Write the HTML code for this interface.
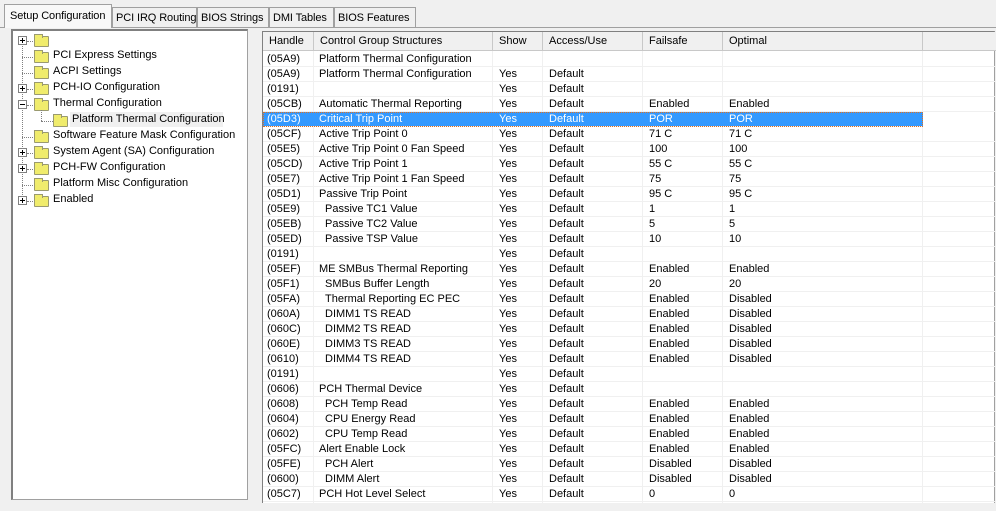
<!DOCTYPE html>
<html><head><style>
*{margin:0;padding:0;box-sizing:border-box}
body{width:996px;height:503px;background:#f0f0f0;font-family:"Liberation Sans",sans-serif;font-size:11px;color:#000;position:relative;overflow:hidden}
.a{position:absolute;white-space:nowrap}
.tab{position:absolute;top:7px;height:21px;border:1px solid #a0a0a0;border-bottom:none;background:#f0f0f0;padding:4px 0 0 3px;white-space:nowrap;overflow:hidden;line-height:13px;letter-spacing:-0.1px}
.tab.act{top:4px;height:24px;background:#f8f8f8;padding-top:5px;padding-left:5px;z-index:2}
#tree{position:absolute;left:11px;top:29px;width:237px;height:471px;background:#fff;border:1px solid #a0a0a0;border-left:2px solid #808080;border-top:2px solid #808080}
.pb{position:absolute;width:9px;height:9px;border:1px solid #808080;background:#fff}
.pb:before{content:"";position:absolute;left:1px;top:3px;width:5px;height:1px;background:#000}
.pb.p:after{content:"";position:absolute;left:3px;top:1px;width:1px;height:5px;background:#000}
.fd{position:absolute;width:15px;height:11px;background:#f0ec6c;border:1px solid #9a9a70;border-radius:1px}
.fd:before{content:"";position:absolute;left:-1px;top:-3px;width:7px;height:3px;background:#f0ec6c;border:1px solid #9a9a70;border-bottom:none}
.dh{position:absolute;height:0;border-top:1px dotted #808080}
.dv{position:absolute;width:0;border-left:1px dotted #808080}
#list{position:absolute;left:262px;top:31px;width:733px;height:472px;background:#fff;border-left:1px solid #808080;border-top:1px solid #808080;border-right:1px solid #a0a0a0}
.hd{position:absolute;top:0;height:19px;background:#f0f0f0;border-right:1px solid #c8c8c8;border-bottom:1px solid #c8c8c8;padding:3px 0 0 6px}
.vl{position:absolute;top:19px;width:1px;height:460px;background:#f0f0f0}
.row{position:absolute;left:0;width:732px;height:15px;border-bottom:1px solid #f0f0f0}
.row span{position:absolute;top:1px}
.sel{background:#3399ff;color:#fff;width:660px;outline:1px dotted #e07020;outline-offset:-1px}
</style></head><body>
<div class="tab act" style="left:4px;width:108px">Setup Configuration</div>
<div class="tab" style="left:112px;width:85px">PCI IRQ Routing</div>
<div class="tab" style="left:197px;width:72px">BIOS Strings</div>
<div class="tab" style="left:269px;width:65px">DMI Tables</div>
<div class="tab" style="left:334px;width:82px">BIOS Features</div>
<div class="a" style="left:0;top:27px;width:996px;height:1px;background:#a0a0a0"></div>

<div id="tree">
<div class="dv" style="left:9px;top:10px;height:160px"></div>
<div class="dh" style="left:14px;top:10px;width:8px"></div><div class="pb p" style="left:5px;top:5px"></div><div class="fd" style="left:21px;top:5px"></div>
<div class="dh" style="left:9px;top:26px;width:13px"></div><div class="fd" style="left:21px;top:21px"></div><div class="a" style="left:40px;top:18px">PCI Express Settings</div>
<div class="dh" style="left:9px;top:42px;width:13px"></div><div class="fd" style="left:21px;top:37px"></div><div class="a" style="left:40px;top:34px">ACPI Settings</div>
<div class="dh" style="left:14px;top:58px;width:8px"></div><div class="pb p" style="left:5px;top:53px"></div><div class="fd" style="left:21px;top:53px"></div><div class="a" style="left:40px;top:50px">PCH-IO Configuration</div>
<div class="dh" style="left:14px;top:74px;width:8px"></div><div class="pb" style="left:5px;top:69px"></div><div class="fd" style="left:21px;top:69px"></div><div class="a" style="left:40px;top:66px">Thermal Configuration</div>
<div class="dv" style="left:28px;top:79px;height:11px"></div><div class="dh" style="left:28px;top:90px;width:12px"></div><div class="fd" style="left:40px;top:85px"></div>
<div class="a" style="left:57px;top:81px;height:15px;width:153px;background:#f0f0f0;padding:1px 0 0 2px">Platform Thermal Configuration</div>
<div class="dh" style="left:9px;top:106px;width:13px"></div><div class="fd" style="left:21px;top:101px"></div><div class="a" style="left:40px;top:98px">Software Feature Mask Configuration</div>
<div class="dh" style="left:14px;top:122px;width:8px"></div><div class="pb p" style="left:5px;top:117px"></div><div class="fd" style="left:21px;top:117px"></div><div class="a" style="left:40px;top:114px">System Agent (SA) Configuration</div>
<div class="dh" style="left:14px;top:138px;width:8px"></div><div class="pb p" style="left:5px;top:133px"></div><div class="fd" style="left:21px;top:133px"></div><div class="a" style="left:40px;top:130px">PCH-FW Configuration</div>
<div class="dh" style="left:9px;top:154px;width:13px"></div><div class="fd" style="left:21px;top:149px"></div><div class="a" style="left:40px;top:146px">Platform Misc Configuration</div>
<div class="dh" style="left:14px;top:170px;width:8px"></div><div class="pb p" style="left:5px;top:165px"></div><div class="fd" style="left:21px;top:165px"></div><div class="a" style="left:40px;top:162px">Enabled</div>
</div>

<div id="list">
<div class="hd" style="left:0;width:51px">Handle</div>
<div class="hd" style="left:51px;width:179px">Control Group Structures</div>
<div class="hd" style="left:230px;width:50px">Show</div>
<div class="hd" style="left:280px;width:100px">Access/Use</div>
<div class="hd" style="left:380px;width:80px">Failsafe</div>
<div class="hd" style="left:460px;width:200px">Optimal</div>
<div class="hd" style="left:660px;width:73px;border-right:none"></div>
<div class="vl" style="left:50px"></div><div class="vl" style="left:229px"></div><div class="vl" style="left:279px"></div><div class="vl" style="left:379px"></div><div class="vl" style="left:459px"></div><div class="vl" style="left:659px"></div>
<div id="rows"></div>
</div>
<script>
var d=[
["(05A9)","Platform Thermal Configuration","","","",""],
["(05A9)","Platform Thermal Configuration","Yes","Default","",""],
["(0191)","","Yes","Default","",""],
["(05CB)","Automatic Thermal Reporting","Yes","Default","Enabled","Enabled"],
["(05D3)","Critical Trip Point","Yes","Default","POR","POR"],
["(05CF)","Active Trip Point 0","Yes","Default","71 C","71 C"],
["(05E5)","Active Trip Point 0 Fan Speed","Yes","Default","100","100"],
["(05CD)","Active Trip Point 1","Yes","Default","55 C","55 C"],
["(05E7)","Active Trip Point 1 Fan Speed","Yes","Default","75","75"],
["(05D1)","Passive Trip Point","Yes","Default","95 C","95 C"],
["(05E9)","  Passive TC1 Value","Yes","Default","1","1"],
["(05EB)","  Passive TC2 Value","Yes","Default","5","5"],
["(05ED)","  Passive TSP Value","Yes","Default","10","10"],
["(0191)","","Yes","Default","",""],
["(05EF)","ME SMBus Thermal Reporting","Yes","Default","Enabled","Enabled"],
["(05F1)","  SMBus Buffer Length","Yes","Default","20","20"],
["(05FA)","  Thermal Reporting EC PEC","Yes","Default","Enabled","Disabled"],
["(060A)","  DIMM1 TS READ","Yes","Default","Enabled","Disabled"],
["(060C)","  DIMM2 TS READ","Yes","Default","Enabled","Disabled"],
["(060E)","  DIMM3 TS READ","Yes","Default","Enabled","Disabled"],
["(0610)","  DIMM4 TS READ","Yes","Default","Enabled","Disabled"],
["(0191)","","Yes","Default","",""],
["(0606)","PCH Thermal Device","Yes","Default","",""],
["(0608)","  PCH Temp Read","Yes","Default","Enabled","Enabled"],
["(0604)","  CPU Energy Read","Yes","Default","Enabled","Enabled"],
["(0602)","  CPU Temp Read","Yes","Default","Enabled","Enabled"],
["(05FC)","Alert Enable Lock","Yes","Default","Enabled","Enabled"],
["(05FE)","  PCH Alert","Yes","Default","Disabled","Disabled"],
["(0600)","  DIMM Alert","Yes","Default","Disabled","Disabled"],
["(05C7)","PCH Hot Level Select","Yes","Default","0","0"]];
var x=[4,56,236,286,386,466],h="";
d.forEach(function(r,i){
 h+='<div class="row'+(i==4?' sel':'')+'" style="top:'+(20+15*i)+'px">';
 r.forEach(function(c,j){var t=c,l=x[j];if(c.indexOf("  ")==0){t=c.slice(2);l+=6}
 h+='<span style="left:'+l+'px">'+t+'</span>'});
 h+='</div>'});
document.getElementById("rows").innerHTML=h;
</script>
</body></html>
